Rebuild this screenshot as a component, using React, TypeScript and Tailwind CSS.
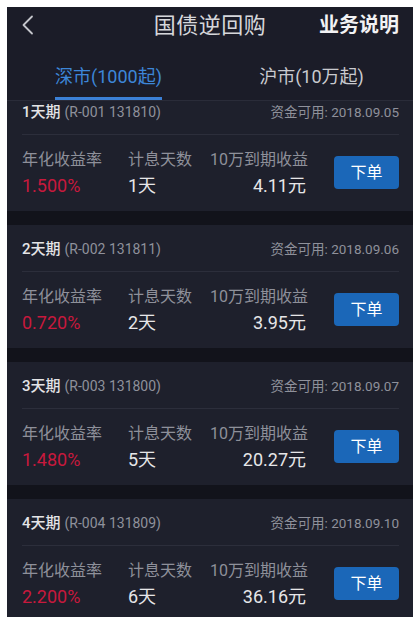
import React from 'react';

interface RepoItem {
  period: string;
  code: string;
  date: string;
  rate: string;
  days: string;
  income: string;
}

const items: RepoItem[] = [
  { period: '1天期', code: '(R-001 131810)', date: '2018.09.05', rate: '1.500%', days: '1天', income: '4.11元' },
  { period: '2天期', code: '(R-002 131811)', date: '2018.09.06', rate: '0.720%', days: '2天', income: '3.95元' },
  { period: '3天期', code: '(R-003 131800)', date: '2018.09.07', rate: '1.480%', days: '5天', income: '20.27元' },
  { period: '4天期', code: '(R-004 131809)', date: '2018.09.10', rate: '2.200%', days: '6天', income: '36.16元' },
];

const font = { fontFamily: 'Roboto, "Noto Sans CJK SC", sans-serif' };

const RepoCard = ({ item }: { item: RepoItem }) => (
  <div className="shrink-0 h-[123px] bg-[#1e202c]">
    {/* 标题行 */}
    <div className="mx-[15px] mr-[14px] h-[47px] pt-[3px] flex items-center justify-between border-b border-[#2c2e3b]">
      <div className="flex items-baseline">
        <span className="text-[15px] font-medium text-[#e4e4e6]">{item.period}</span>
        <span className="ml-[4px] text-[14px] text-[#8f919b]">{item.code}</span>
      </div>
      <span className="text-[13.5px] text-[#8f919b]">资金可用: {item.date}</span>
    </div>
    {/* 数据行 */}
    <div className="flex items-start pl-[15px] pr-[14px] pt-[14px]">
      <div className="w-[106px]">
        <div className="text-[16px] leading-[22px] text-[#8e909a]">年化收益率</div>
        <div className="mt-[2px] text-[18px] leading-[26px] text-[#c8193d]">{item.rate}</div>
      </div>
      <div className="w-[82px]">
        <div className="text-[16px] leading-[22px] text-[#8e909a]">计息天数</div>
        <div className="mt-[2px] text-[18px] leading-[26px] text-[#e6e6e8]">{item.days}</div>
      </div>
      <div className="w-[96px] text-right">
        <div className="text-[16px] leading-[22px] text-[#8e909a] whitespace-nowrap">10万到期收益</div>
        <div className="mt-[2px] text-[18px] leading-[26px] text-[#e6e6e8]">{item.income}</div>
      </div>
      <button className="ml-auto mt-[7px] w-[65px] h-[33px] rounded-[4px] bg-[#1b67b8] text-[16px] text-white flex items-center justify-center">
        下单
      </button>
    </div>
  </div>
);

export default function App() {
  return (
    <div className="w-[420px] h-[623px] bg-white p-[7px] pb-[6px]" style={font}>
      <div className="h-[610px] bg-[#1b1c28] overflow-hidden flex flex-col">
        {/* 顶部导航 */}
        <div className="relative h-[36px] shrink-0 flex items-center justify-center">
          <svg className="absolute left-[14px] top-[8px]" width="14" height="20" viewBox="0 0 14 20" fill="none">
            <path d="M11 1.5 L2.5 10 L11 18.5" stroke="#c4c5cb" strokeWidth="1.8" strokeLinecap="round" strokeLinejoin="round" />
          </svg>
          <span className="text-[22px] text-[#d6d7db] tracking-[0.5px]">国债逆回购</span>
          <span className="absolute right-[14px] text-[20px] font-bold text-[#f2f2f4]">业务说明</span>
        </div>

        {/* Tabs */}
        <div className="shrink-0 flex border-b border-[#2a2c39]">
          <div className="flex-1 flex justify-center">
            <div className="flex flex-col items-center pt-[22px]">
              <span className="text-[18px] leading-[24px] text-[#3d86d8]">深市(1000起)</span>
              <div className="mt-[8px] h-[3px] w-full bg-[#3b80d6]" />
            </div>
          </div>
          <div className="flex-1 flex justify-center">
            <div className="flex flex-col items-center pt-[22px]">
              <span className="text-[18px] leading-[24px] text-[#c9cacf]">沪市(10万起)</span>
              <div className="mt-[8px] h-[3px]" />
            </div>
          </div>
        </div>

        {/* 列表 */}
        <div className="flex-1 overflow-hidden bg-[#12131b]">
          <div className="-mt-[13px] flex flex-col gap-[14px]">
            {items.map((item) => (
              <RepoCard key={item.period} item={item} />
            ))}
          </div>
        </div>
      </div>
    </div>
  );
}
